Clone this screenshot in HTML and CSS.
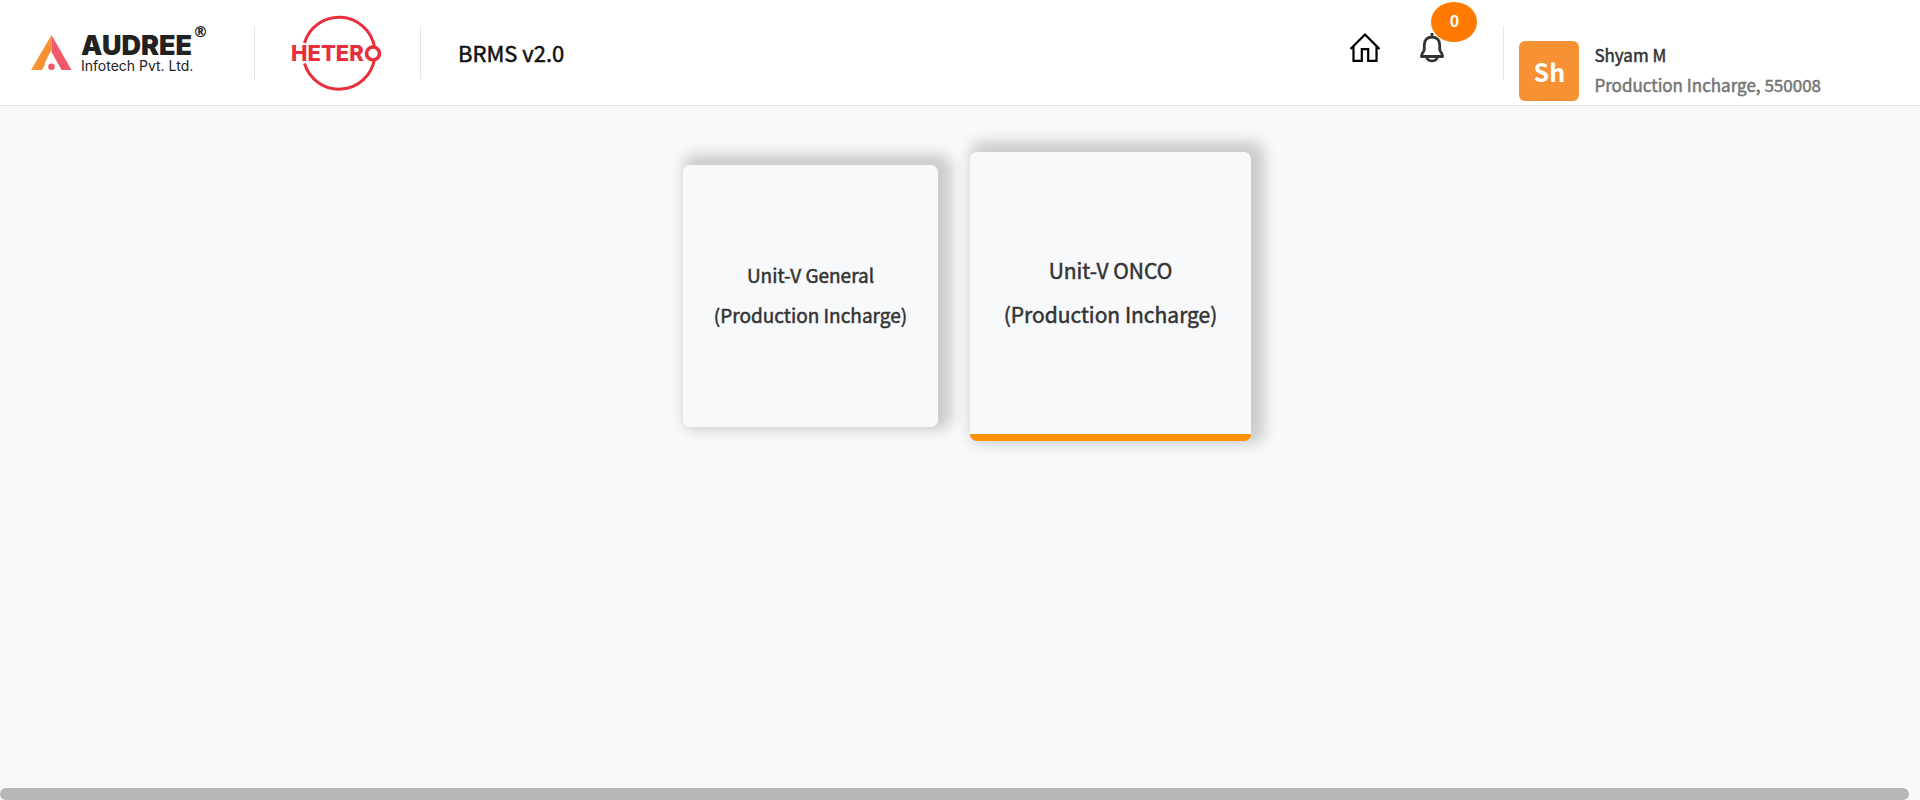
FILE: index.html
```html
<!DOCTYPE html>
<html lang="en">
<head>
<meta charset="utf-8">
<title>BRMS v2.0</title>
<link rel="stylesheet" href="styles.css">
</head>
<body>
<header class="topbar">
  <div class="brand">
    <svg class="brand-mark" viewBox="0 0 41 36" aria-hidden="true">
      <path d="M20.500 0V14.500L13.500 28.500H16.500V35H0Z" fill="#f79234"/>
      <path d="M20.500 0L40.500 35H30L20.500 18Z" fill="#f25a6b"/>
      <path d="M20.500 17L30.500 35H11Z" fill="#fff"/>
      <circle cx="20.500" cy="31.800" r="3.300" fill="#f25a6b"/>
    </svg>
    <div class="brand-text">
      <div class="brand-name">AUDREE<span class="brand-reg">®</span></div>
      <div class="brand-sub">Infotech Pvt. Ltd.</div>
    </div>
  </div>
  <span class="divider"></span>
  <svg class="hetero" viewBox="0 0 90 76" role="img" aria-label="Hetero">
    <g fill="none" stroke="#ea2f3c" stroke-width="3">
      <path d="M12.500 28A36 36 0 0 1 82.500 32"/>
      <path d="M12.500 48.500A36 36 0 0 0 82.500 44"/>
    </g>
    <text class="hetero-text" x="-1" y="46">HETER</text>
    <circle cx="81" cy="38.500" r="6.500" fill="#fff" stroke="#ea2f3c" stroke-width="3.600"/>
  </svg>
  <span class="divider"></span>
  <h1 class="app-title">BRMS v2.0</h1>
  <nav class="actions">
    <a class="icon-link" href="#" aria-label="Home">
      <svg width="32" height="32" viewBox="0 0 32 32" fill="none" stroke="#000" stroke-width="2.200">
        <path d="M1.500 17L16 2.500L30.500 17M4.500 14.500V28.800H12.800V17.200H19.200V28.800H27.500V14.500"/>
      </svg>
    </a>
    <button class="icon-link bell" type="button" aria-label="Notifications">
      <svg width="26" height="32" viewBox="0 0 26 32" fill="none" stroke="#333" stroke-width="2.800">
        <path d="M13 1V5M13 5C8 5 5.300 8.500 5.300 13V17.500C5.300 19.500 2.400 21 2.400 24.500H23.600C23.600 21 20.700 19.500 20.700 17.500V13C20.700 8.500 18 5 13 5Z" stroke-linejoin="round"/>
        <path d="M7.800 25.500C9 30 17 30 18.200 25.500"/>
      </svg>
      <span class="badge">0</span>
    </button>
  </nav>
  <span class="divider"></span>
  <div class="user">
    <div class="avatar">Sh</div>
    <div class="user-text">
      <div class="user-name">Shyam M</div>
      <div class="user-role">Production Incharge, 550008</div>
    </div>
  </div>
</header>
<main class="units">
  <button class="unit" type="button"><span>Unit-V General</span><span>(Production Incharge)</span></button>
  <button class="unit unit-active" type="button"><span>Unit-V ONCO</span><span>(Production Incharge)</span></button>
</main>
<div class="scroll-track"><div class="scroll-thumb"></div></div>
</body>
</html>
```
FILE: styles.css
```css
* { box-sizing: border-box; }

body {
  margin: 0;
  min-height: 100vh;
  display: flex;
  flex-direction: column;
  background: #f7f9fb;
  color: #333;
  font-family: "Noto Sans CJK SC", "Noto Sans", sans-serif;
  font-weight: 400;
  -webkit-text-stroke: 0.5px;
}

button { font: inherit; color: inherit; border: 0; cursor: pointer; }

.topbar {
  display: flex;
  align-items: center;
  min-height: 106px;
  padding: 0 99px 0 31px;
  background: #fff;
  border-bottom: 1px solid #e5e7eb;
}

.divider { width: 1px; height: 53px; background: #e4e4ec; }

.brand { display: flex; align-items: center; gap: 9px; width: 223px; }
.brand-mark { width: 41px; height: 36px; overflow: visible; }
.brand-text { padding-top: 3px; font-family: Inter, sans-serif; color: #222; -webkit-text-stroke: 0; }
.brand-name { position: relative; font-size: 27px; line-height: 24px; font-weight: 900; }
.brand-reg { position: absolute; top: -11px; margin-left: 1px; font: 700 15px "DejaVu Sans", sans-serif; }
.brand-sub { font-size: 14px; line-height: 16px; font-weight: 400; }

.hetero { width: 90px; height: 76px; margin: 0 38px 0 37px; overflow: visible; }
.hetero-text {
  font: 800 22px Inter, sans-serif;
  fill: #ea2f3c;
  -webkit-text-stroke: 0;
}

.app-title { margin: 0 0 2px 37px; font-size: 22px; line-height: 32px; font-weight: 400; color: #111; }

.actions { display: flex; gap: 38px; margin: 0 58px 10px auto; }
.icon-link { display: block; padding: 0; background: none; height: 32px; }
.icon-link svg { display: block; }
.bell { position: relative; }
.badge {
  position: absolute;
  left: 12px;
  top: -30px;
  width: 46px;
  height: 40px;
  border-radius: 50%;
  background: #ff7a00;
  color: #fff;
  font-size: 16px;
  line-height: 36px;
  font-weight: 700;
  text-align: center;
  -webkit-text-stroke: 0;
}

.user { display: flex; align-items: center; gap: 15px; margin: 37px 0 0 15px; }
.avatar {
  width: 60px;
  height: 60px;
  border-radius: 6px;
  background: #f79234;
  color: #fff;
  font-size: 25px;
  line-height: 60px;
  font-weight: 700;
  text-align: center;
  -webkit-text-stroke: 0;
}
.user-text { padding-bottom: 2px; font-size: 17px; line-height: 30px; white-space: nowrap; }
.user-role { color: #757575; }

.units {
  flex: 1;
  display: flex;
  justify-content: center;
  align-items: flex-start;
  gap: 32px;
  padding: 46px 24px 24px 38px;
}
.unit {
  display: flex;
  flex-direction: column;
  align-items: center;
  justify-content: center;
  width: 255px;
  height: 262px;
  margin-top: 13px;
  padding: 0 0 3px;
  border-radius: 7px;
  background: #f7f9fb;
  box-shadow: 7px -4px 13px 7px #cdcdcd;
  font-size: 19px;
  line-height: 40px;
}
.unit-active {
  width: 281px;
  height: 289px;
  margin-top: 0;
  border-bottom: 7px solid #ff9100;
  font-size: 21px;
  line-height: 44px;
}

.scroll-track { padding-right: 11px; }
.scroll-thumb { height: 12px; border-radius: 6px; background: #b5b8b7; }
```
